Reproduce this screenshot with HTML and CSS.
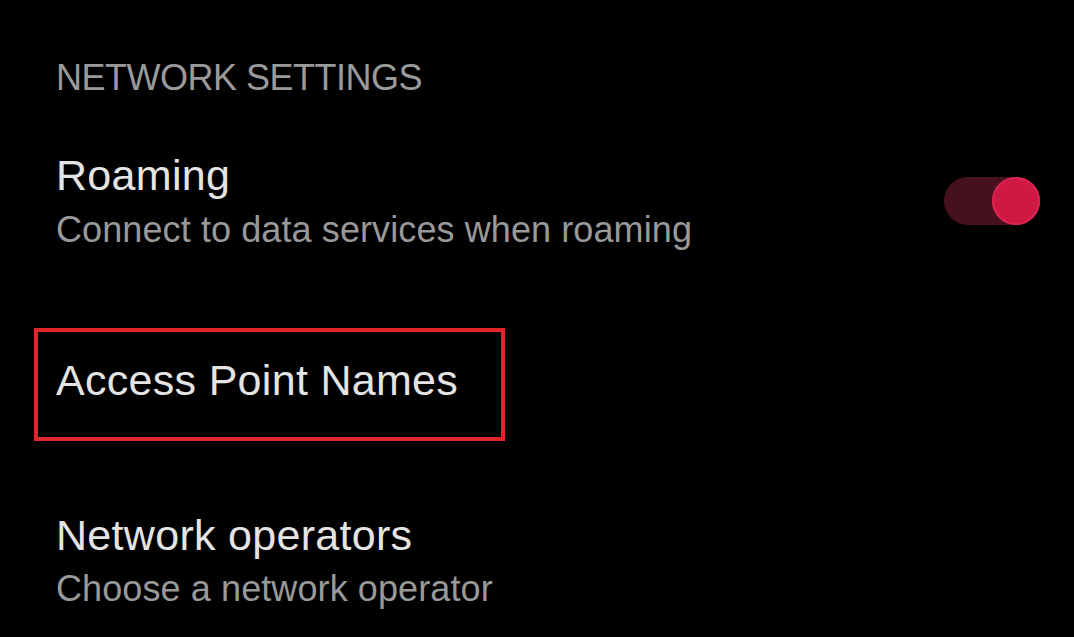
FILE: index.html
```html
<!DOCTYPE html>
<html lang="en">
<head>
<meta charset="utf-8">
<title>Network settings</title>
<link rel="stylesheet" href="styles.css">
</head>
<body>
<main class="page">
  <h2 class="section-header">NETWORK SETTINGS</h2>
  <div class="row row-roaming">
    <div class="row-text">
      <div class="title">Roaming</div>
      <div class="subtitle">Connect to data services when roaming</div>
    </div>
    <div class="toggle on"><div class="thumb"></div></div>
  </div>
  <div class="highlight">
    <div class="title">Access Point Names</div>
  </div>
  <div class="row row-operators">
    <div class="row-text">
      <div class="title">Network operators</div>
      <div class="subtitle subtitle-tight">Choose a network operator</div>
    </div>
  </div>
</main>
</body>
</html>
```
FILE: styles.css
```css
html, body {
  margin: 0;
  padding: 0;
  background: #000;
}
body {
  width: 1074px;
  height: 637px;
  overflow: hidden;
  font-family: "Liberation Sans", Arial, sans-serif;
}
.page {
  display: flex;
  flex-direction: column;
  align-items: stretch;
  padding: 56px 34px 0 56px;
}
.section-header {
  margin: 0;
  font-weight: normal;
  font-size: 36px;
  line-height: 44px;
  height: 44px;
  letter-spacing: -0.5px;
  color: #9a9a9a;
}
.row {
  display: flex;
  align-items: center;
  justify-content: space-between;
}
.row-roaming {
  margin-top: 50px;
}
.row-text {
  display: flex;
  flex-direction: column;
}
.title {
  font-size: 43px;
  line-height: 50px;
  height: 50px;
  letter-spacing: 0.3px;
  color: #e4e4e4;
}
.subtitle {
  margin-top: 8px;
  font-size: 36px;
  line-height: 44px;
  height: 44px;
  letter-spacing: 0.1px;
  color: #999999;
}
.subtitle-tight {
  margin-top: 7px;
}
.toggle {
  width: 96px;
  height: 48px;
  border-radius: 24px;
  background: #46101c;
  display: flex;
  justify-content: flex-end;
}
.thumb {
  width: 48px;
  height: 48px;
  border-radius: 50%;
  background: #cf1944;
  box-shadow: inset 0 0 0 2px #d6264f;
}
.highlight {
  align-self: flex-start;
  margin-top: 76px;
  margin-left: -22px;
  width: 471px;
  box-sizing: border-box;
  border: 4px solid #e2252b;
  padding: 23px 18px 32px 18px;
}
.row-operators {
  margin-top: 69px;
}
```
